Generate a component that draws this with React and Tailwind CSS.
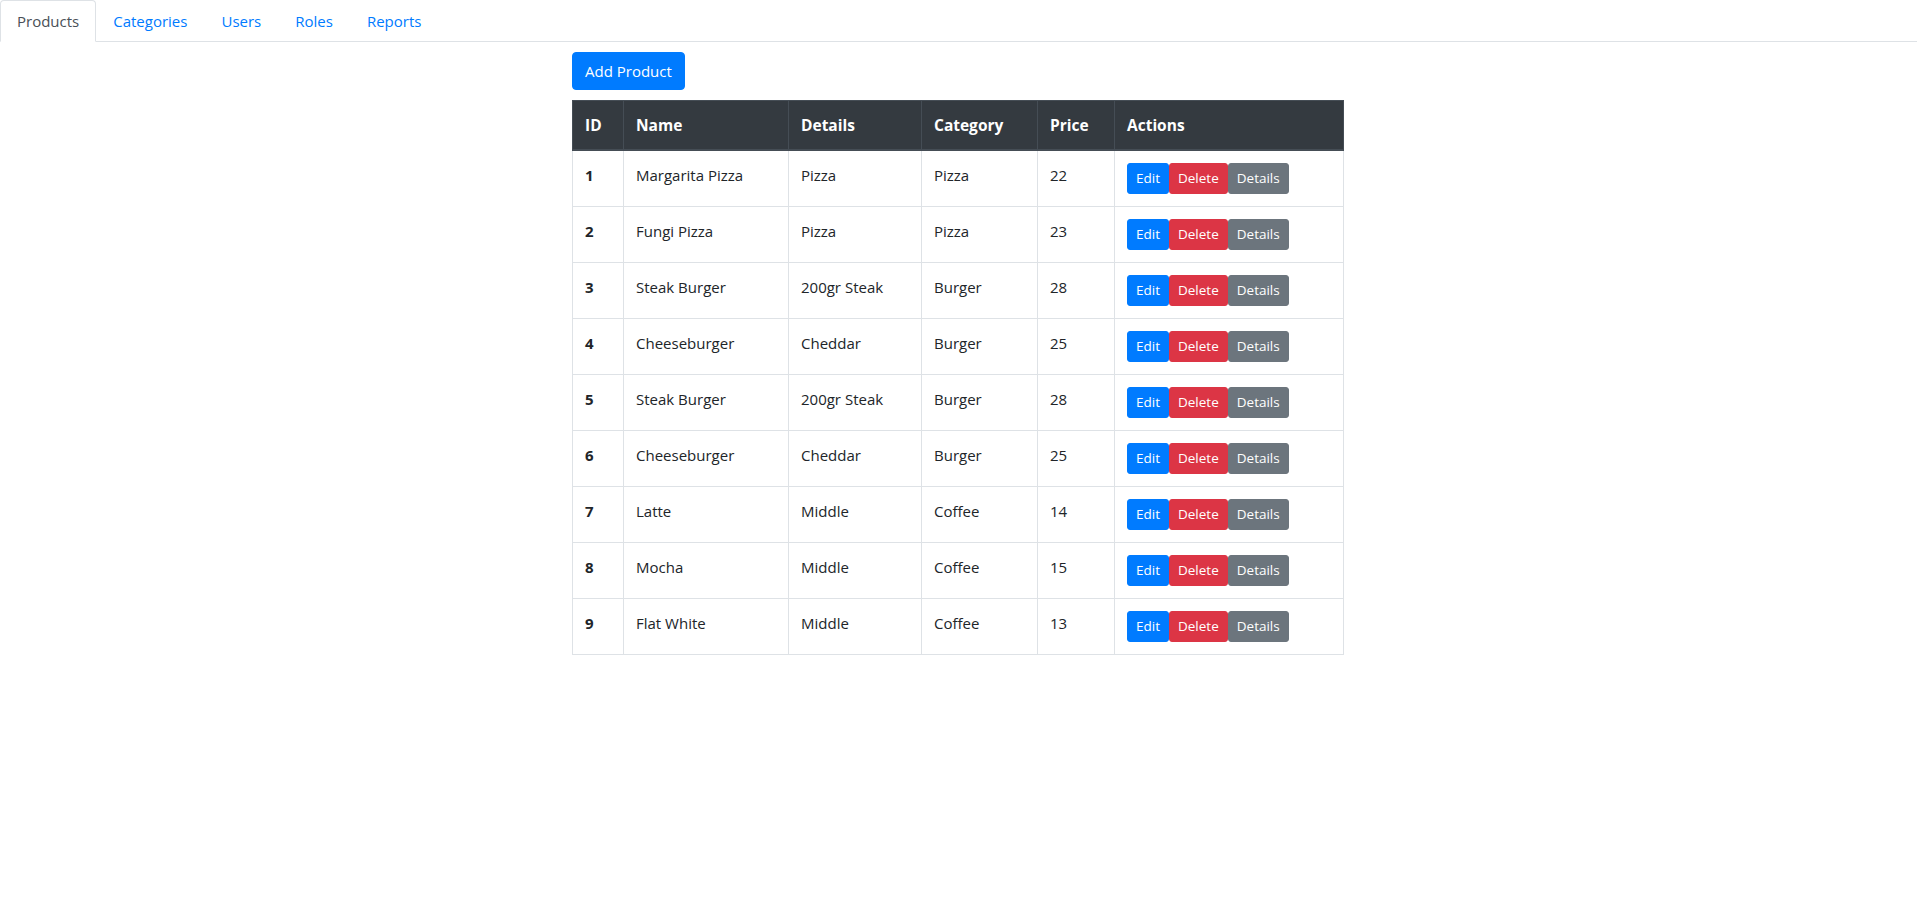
import React from 'react';

const products = [
  { id: 1, name: 'Margarita Pizza', details: 'Pizza', category: 'Pizza', price: 22 },
  { id: 2, name: 'Fungi Pizza', details: 'Pizza', category: 'Pizza', price: 23 },
  { id: 3, name: 'Steak Burger', details: '200gr Steak', category: 'Burger', price: 28 },
  { id: 4, name: 'Cheeseburger', details: 'Cheddar', category: 'Burger', price: 25 },
  { id: 5, name: 'Steak Burger', details: '200gr Steak', category: 'Burger', price: 28 },
  { id: 6, name: 'Cheeseburger', details: 'Cheddar', category: 'Burger', price: 25 },
  { id: 7, name: 'Latte', details: 'Middle', category: 'Coffee', price: 14 },
  { id: 8, name: 'Mocha', details: 'Middle', category: 'Coffee', price: 15 },
  { id: 9, name: 'Flat White', details: 'Middle', category: 'Coffee', price: 13 },
];

const tabs = ['Products', 'Categories', 'Users', 'Roles', 'Reports'];

const App = () => {
  return (
    <div className="min-h-screen bg-white text-[#212529] font-['Segoe_UI','Open_Sans',sans-serif] text-[15px] leading-6">
      {/* Tabs */}
      <ul className="flex border-b border-[#dee2e6]">
        {tabs.map((t, i) => (
          <li key={t} className="-mb-px">
            <a
              href="#"
              className={
                i === 0
                  ? 'block px-4 py-2 border border-[#dee2e6] border-b-white rounded-t-[4px] bg-white text-[#495057]'
                  : 'block px-4 py-2 border border-transparent text-[#007bff]'
              }
            >
              {t}
            </a>
          </li>
        ))}
      </ul>

      {/* Content */}
      <div className="w-[773px] mx-auto pt-[10px]">
        <button className="bg-[#007bff] text-white px-3 py-[6px] rounded-[4px] border border-[#007bff] leading-6">
          Add Product
        </button>

        <table className="mt-[10px] w-[771px] table-fixed border-collapse">
          <colgroup>
            <col className="w-[51px]" />
            <col className="w-[165px]" />
            <col className="w-[133px]" />
            <col className="w-[116px]" />
            <col className="w-[77px]" />
            <col className="w-[229px]" />
          </colgroup>
          <thead>
            <tr className="bg-[#343a40] text-white text-left text-[15.5px]">
              {['ID', 'Name', 'Details', 'Category', 'Price', 'Actions'].map((h) => (
                <th key={h} className="p-3 font-bold border border-[#454d55] border-b-2 align-bottom">
                  {h}
                </th>
              ))}
            </tr>
          </thead>
          <tbody>
            {products.map((p) => (
              <tr key={p.id}>
                <th className="p-3 font-bold text-left align-top border border-[#dee2e6]">{p.id}</th>
                <td className="p-3 align-top border border-[#dee2e6]">{p.name}</td>
                <td className="p-3 align-top border border-[#dee2e6]">{p.details}</td>
                <td className="p-3 align-top border border-[#dee2e6]">{p.category}</td>
                <td className="p-3 align-top border border-[#dee2e6]">{p.price}</td>
                <td className="p-3 align-top border border-[#dee2e6]">
                  <div className="flex">
                    <button className="bg-[#007bff] text-white text-[13.5px] leading-[21px] px-2 py-1 border border-[#007bff] rounded-[3px]">
                      Edit
                    </button>
                    <button className="bg-[#dc3545] text-white text-[13.5px] leading-[21px] px-2 py-1 border border-[#dc3545] rounded-[3px]">
                      Delete
                    </button>
                    <button className="bg-[#6c757d] text-white text-[13.5px] leading-[21px] px-2 py-1 border border-[#6c757d] rounded-[3px]">
                      Details
                    </button>
                  </div>
                </td>
              </tr>
            ))}
          </tbody>
        </table>
      </div>
    </div>
  );
};

export default App;
